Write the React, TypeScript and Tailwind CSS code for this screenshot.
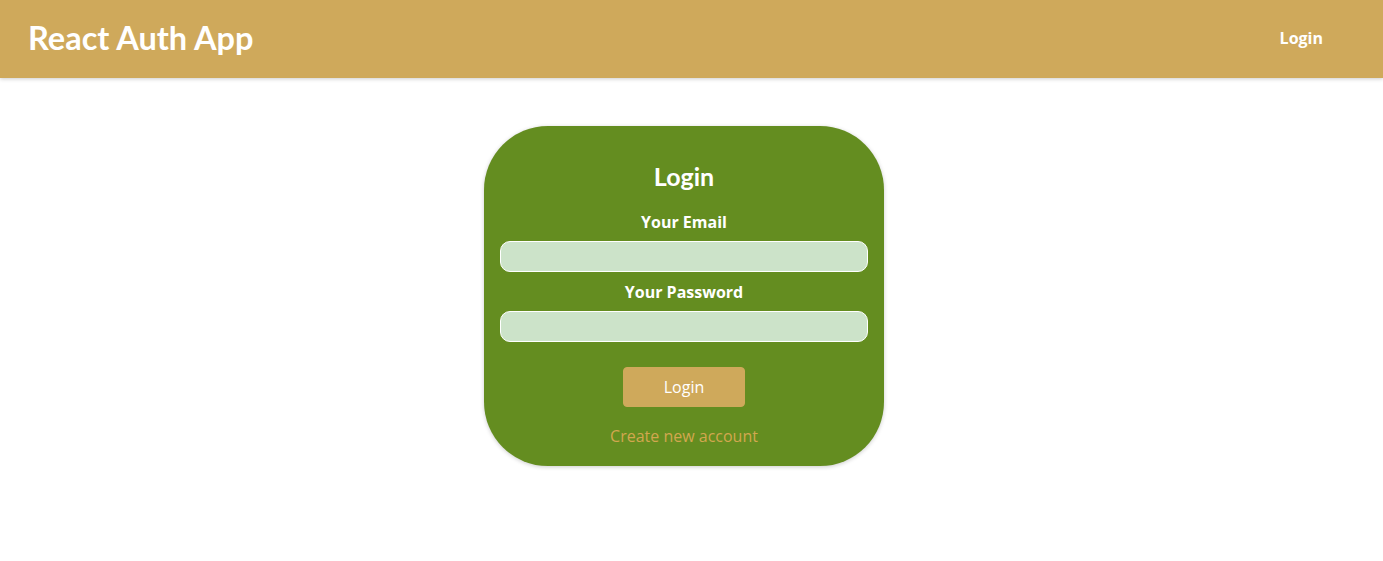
import React from "react";

export default function App() {
  return (
    <div className="min-h-screen bg-white" style={{ fontFamily: '"Open Sans", sans-serif' }}>
      <header className="h-[78px] w-full bg-[#cfa95b] flex items-center justify-between px-[28px] shadow-[0_1px_4px_rgba(0,0,0,0.2)]">
        <div className="text-[32.5px] font-bold text-white leading-none -mt-[2px]" style={{ fontFamily: 'Lato, sans-serif' }}>
          React Auth App
        </div>
        <nav className="pr-[32px] -mt-[2px]">
          <a className="text-white font-bold text-[16px] leading-none">Login</a>
        </nav>
      </header>
      <main className="flex justify-center pt-[48px] pr-[15px]">
        <section className="w-[400px] h-[340px] bg-[#648d20] rounded-[64px] shadow-[0_1px_4px_rgba(0,0,0,0.2)] p-[16px] flex flex-col items-center text-center">
          <h1 className="text-[25px] font-bold text-white leading-[33px] mt-[18px]" style={{ fontFamily: 'Lato, sans-serif' }}>Login</h1>
          <form className="w-full flex flex-col mt-[18px]">
            <div className="mb-[9px]">
              <label className="block text-white font-bold text-[16px] leading-[22px] mb-[8px]">Your Email</label>
              <input type="email" className="w-full h-[31px] bg-[#cce3c9] border border-white rounded-[10px] outline-none" />
            </div>
            <div className="mb-[8px]">
              <label className="block text-white font-bold text-[16px] leading-[22px] mb-[8px]">Your Password</label>
              <input type="password" className="w-full h-[31px] bg-[#cce3c9] border border-white rounded-[10px] outline-none" />
            </div>
            <div className="flex flex-col items-center mt-[17px]">
              <button type="button" className="h-[40px] px-[40px] bg-[#cfa95b] border border-[#cfa95b] rounded-[4px] text-white text-[16px]">
                Login
              </button>
              <button type="button" className="mt-[18px] bg-transparent text-[#d2a74f] text-[16px] leading-[22px] px-[24px]">
                Create new account
              </button>
            </div>
          </form>
        </section>
      </main>
    </div>
  );
}
